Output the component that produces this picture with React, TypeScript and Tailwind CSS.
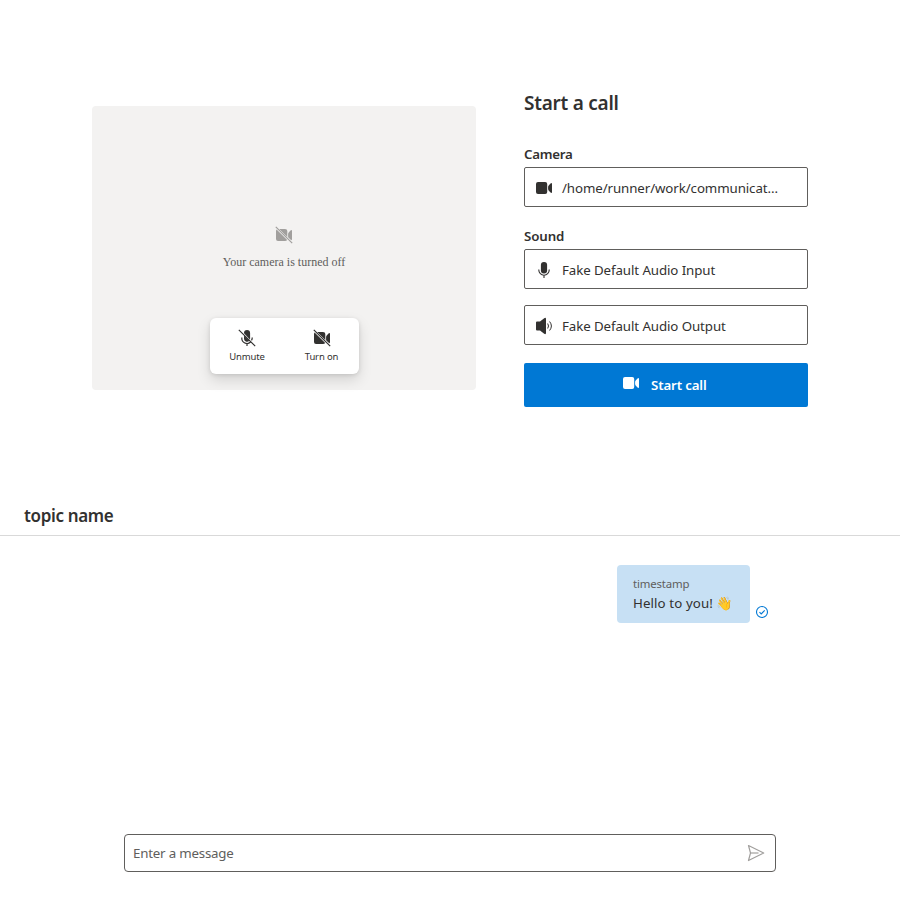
import type { ReactNode } from 'react';

const VideoIcon = ({ className = '' }: { className?: string }) => (
  <svg viewBox="0 0 18 18" width="18" height="18" fill="currentColor" className={className}>
    <rect x="1" y="3" width="11.200" height="12" rx="2" />
    <path d="M13.100 8Q13.100 7.200 13.700 6.500L15.500 4.500Q17 3.500 17 5v8q0 1.500-1.500.5L13.700 11.500Q13.100 10.800 13.100 10Z" />
  </svg>
);

const VideoOffIcon = ({ className = '' }: { className?: string }) => (
  <svg viewBox="0 0 18 18" width="18" height="18" fill="currentColor" className={className}>
    <path d="M4.200 3H10q2.300 0 2.300 2v6.100ZM1.600 3.500 12.200 14.100Q11.400 15 10 15H3q-2 0-2-2V5Q1 4.200 1.600 3.500ZM13.100 8Q13.100 7.200 13.700 6.500L15.500 4.500Q17 3.500 17 5v8q0 1.500-1 1L13.100 11.200Z" />
    <path d="m.8.8 16.400 16.400" stroke="currentColor" strokeWidth="1.200" />
  </svg>
);

const MicIcon = () => (
  <svg viewBox="0 0 18 18" width="18" height="18" fill="currentColor">
    <rect x="5.900" y="1" width="6.200" height="11.500" rx="3" />
    <path d="M3.800 8.500V9a5.200 5.200 0 0 0 10.400 0V8.500M9 14.500V17" fill="none" stroke="currentColor" strokeWidth="1.100" />
  </svg>
);

const MicOffIcon = () => (
  <svg viewBox="0 0 18 18" width="18" height="18" fill="currentColor">
    <path d="M6 4.200V4a3.050 3 0 0 1 6.100 0v5.500q0 .5-.2 1ZM6 6.500l5.300 5.300A3.050 3 0 0 1 6 9.500Z" />
    <path d="M3.800 8.500V9a5.200 5.200 0 0 0 8.800 4M14.200 8.500V9q0 1.300-.7 2.400M9 14.500V17M.8.8l16.400 16.400" fill="none" stroke="currentColor" strokeWidth="1.200" />
  </svg>
);

const SpeakerIcon = () => (
  <svg viewBox="0 0 18 18" width="18" height="18" fill="currentColor">
    <path d="M1 5.500Q1 4.500 2 4.500H5l4.200-3.300Q11 .2 11 2v14q0 1.800-1.800.8L5 13.500H2Q1 13.500 1 12.500Z" />
    <path d="M12.700 6.500q1.600 2.500 0 5M14.600 4.500q3.600 4.500 0 9" fill="none" stroke="currentColor" strokeWidth="1" />
  </svg>
);

const SendIcon = () => (
  <svg viewBox="0 0 18 18" width="18" height="18" fill="none" stroke="#a19f9d" strokeWidth="1.200" strokeLinejoin="round">
    <path d="M1.500 1.500 16.700 9 1.500 16.500 3.500 9Z" />
    <path d="M3.500 9h8" />
  </svg>
);

const SeenIcon = () => (
  <svg viewBox="0 0 14 14" width="14" height="14" fill="none" stroke="#0078d4" strokeWidth="1.100">
    <circle cx="7" cy="7" r="5.500" />
    <path d="m4.500 7.200 1.700 1.700 3.500-3.500" />
  </svg>
);

const DeviceSelect = ({ icon, children }: { icon: ReactNode; children: ReactNode }) => (
  <button className="flex h-10 w-full items-center rounded-[2px] border border-[#605e5c] pt-[2px] pl-[10px] text-left">
    {icon}
    <span className="ml-[9px] text-[13.300px] leading-5 tracking-[-0.09px] whitespace-nowrap">{children}</span>
  </button>
);

export default function App() {
  return (
    <div className="flex h-[900px] w-[900px] flex-col overflow-hidden bg-white font-['Noto_Sans',sans-serif] text-[#323130]">
      <section className="flex h-[497px] shrink-0 gap-12 pl-[92px]">
        <div className="mt-[106px] flex h-[284px] w-96 flex-col items-center rounded-[4px] bg-[#f3f2f1]">
          <VideoOffIcon className="mt-[120px] text-[#a19f9d]" />
          <p className="mt-[11px] font-['Liberation_Serif',serif] text-[12px] leading-[14px] text-[#605e5c]">Your camera is turned off</p>
          <div className="mt-[49px] flex h-14 w-[149px] rounded-[6px] bg-white shadow-[0_6px_14px_rgba(0,0,0,0.13),0_1px_4px_rgba(0,0,0,0.11)]">
            <button className="flex w-[75px] flex-col items-center pt-[11px]">
              <MicOffIcon />
              <span className="mt-[3px] text-[9.500px] leading-[14px] tracking-[-0.15px]">Unmute</span>
            </button>
            <button className="flex w-[74px] flex-col items-center pt-[11px]">
              <VideoOffIcon />
              <span className="mt-[3px] text-[9.500px] leading-[14px] tracking-[-0.15px]">Turn on</span>
            </button>
          </div>
        </div>
        <div className="mt-[89px] w-[284px]">
          <h1 className="text-[19px] leading-7 font-semibold tracking-[-0.25px]">Start a call</h1>
          <h2 className="mt-[27px] mb-[3px] text-[13.300px] leading-5 font-semibold tracking-[-0.25px]">Camera</h2>
          <DeviceSelect icon={<VideoIcon />}>/home/runner/work/communicat...</DeviceSelect>
          <h2 className="mt-[19px] mb-[3px] text-[13.300px] leading-5 font-semibold tracking-[-0.1px]">Sound</h2>
          <DeviceSelect icon={<MicIcon />}>Fake Default Audio Input</DeviceSelect>
          <div className="mt-4">
            <DeviceSelect icon={<SpeakerIcon />}>Fake Default Audio Output</DeviceSelect>
          </div>
          <button className="mt-[18px] flex h-11 w-full items-center rounded-[2px] bg-[#0078d4] pl-[98px] text-white">
            <VideoIcon className="mb-1" />
            <span className="ml-[11px] text-[13.300px] leading-5 font-semibold tracking-[-0.15px]">Start call</span>
          </button>
        </div>
      </section>
      <header className="h-[39px] shrink-0 border-b border-[#d9d9d9] pt-[7px] pl-6">
        <h2 className="text-[17px] leading-6 font-semibold tracking-[-0.35px]">topic name</h2>
      </header>
      <main className="flex flex-1 justify-end pt-[29px] pr-[131px]">
        <div className="flex h-[58px] items-end">
          <div className="h-[58px] w-[133px] rounded-[4px] bg-[#c7e0f4] pt-[11px] pl-4">
            <div className="text-[11.400px] leading-4 tracking-[-0.15px] text-[#605e5c]">timestamp</div>
            <div className="mt-[1px] text-[13.300px] leading-5 tracking-[0.1px] whitespace-nowrap">Hello to you! 👋</div>
          </div>
          <div className="mb-1 ml-[5px]"><SeenIcon /></div>
        </div>
      </main>
      <footer className="mx-[124px] mb-7 flex h-[38px] shrink-0 items-center justify-between rounded-[4px] border border-[#605e5c] pr-[10px] pl-2">
        <span className="text-[13.300px] leading-5 tracking-[-0.2px] text-[#605e5c]">Enter a message</span>
        <SendIcon />
      </footer>
    </div>
  );
}
